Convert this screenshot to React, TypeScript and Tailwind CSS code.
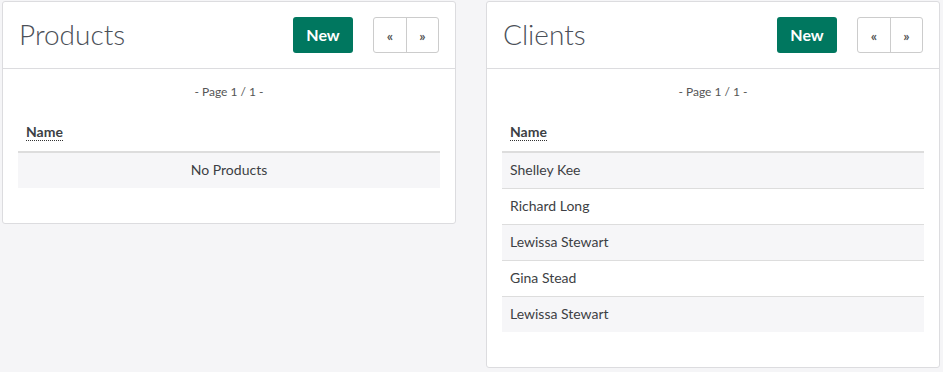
import React from 'react';

interface PanelProps {
  title: string;
  rows: string[];
  empty: string;
}

const Panel: React.FC<PanelProps> = ({ title, rows, empty }) => {
  return (
    <div className="flex-1 bg-white border border-[#dcdcdf] rounded-[3px]">
      {/* Header */}
      <div className="flex items-center px-4 pt-[15px] pb-[15px] border-b border-[#dcdcdf]">
        <h2 className="flex-1 text-[28px] leading-[34px] pb-[2px] font-light text-[#4b5058]">{title}</h2>
        <button className="h-9 w-[60px] rounded-[3px] bg-[#00775f] text-white font-bold text-[16px]">
          New
        </button>
        <div className="ml-5 flex h-9 border border-[#cccccc] rounded-[3px]">
          <button className="w-[32px] text-[14px] font-bold text-[#555]">«</button>
          <button className="w-[32px] text-[14px] font-bold text-[#555] border-l border-[#cccccc]">»</button>
        </div>
      </div>

      {/* Body */}
      <div className="px-[15px] pt-[14px] pb-[15px]">
        <div className="text-center text-[12px] leading-[17px] text-[#555]">- Page 1 / 1 -</div>
        <table className="w-full mt-[14px] mb-5 text-[14px] text-[#3d3f44]">
          <thead>
            <tr>
              <th className="text-left font-bold px-2 pt-2 pb-[9px] leading-5 border-b-2 border-[#dddddd]">
                <span className="border-b border-dotted border-[#333]">Name</span>
              </th>
            </tr>
          </thead>
          <tbody>
            {rows.length === 0 ? (
              <tr className="bg-[#f6f6f8]">
                <td className="text-center px-2 pt-[7px] pb-[9px] leading-[19px]">{empty}</td>
              </tr>
            ) : (
              rows.map((r, i) => (
                <tr key={i} className={i % 2 === 0 ? 'bg-[#f6f6f8]' : 'bg-white'}>
                  <td className={'px-2 pt-[7px] pb-[9px] leading-[19px] ' + (i > 0 ? 'border-t border-[#dddddd]' : '')}>{r}</td>
                </tr>
              ))
            )}
          </tbody>
        </table>
      </div>
    </div>
  );
};

export default function App() {
  return (
    <div
      className="min-h-[372px] bg-[#f5f5f7] pt-px pl-[2px] pr-[3px]"
      style={{ fontFamily: 'Lato, "Open Sans", sans-serif' }}
    >
      <div className="flex items-start gap-[30px]">
        <Panel title="Products" rows={[]} empty="No Products" />
        <Panel
          title="Clients"
          rows={['Shelley Kee', 'Richard Long', 'Lewissa Stewart', 'Gina Stead', 'Lewissa Stewart']}
          empty="No Clients"
        />
      </div>
    </div>
  );
}
